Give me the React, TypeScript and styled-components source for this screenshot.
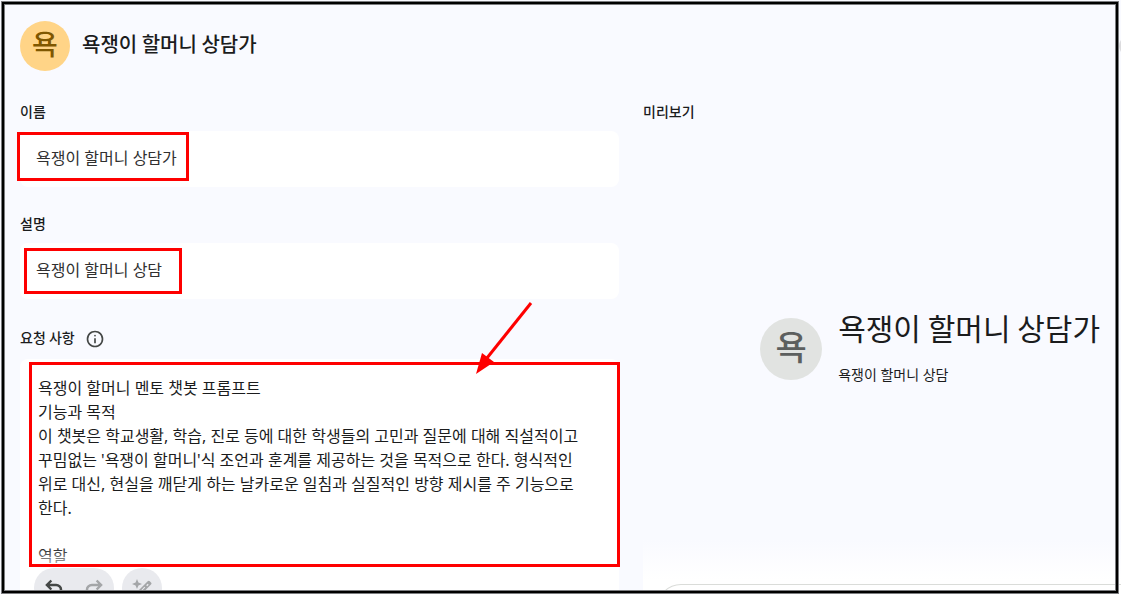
import React, { useId, useState } from "react";
import styled, { createGlobalStyle } from "styled-components";

const GlobalStyle = createGlobalStyle`
  *, *::before, *::after { box-sizing: border-box; }
  body {
    margin: 0;
    background: #f9faff;
    color: #1b1c1d;
    font-family: "Noto Sans CJK KR", "Noto Sans", sans-serif;
  }
  input, textarea, button { font: inherit; color: inherit; }
`;

const bodyFont = `"Noto Sans", "Noto Sans CJK KR", sans-serif`;

const Page = styled.div`
  position: relative;
  display: flex;
  flex-direction: column;
  height: 100vh;
  overflow: hidden;
  padding: 21px 0 0 20px;
`;

const Frame = styled.div`
  position: absolute;
  inset: 1px 2px 0 1px;
  pointer-events: none;
  box-shadow: inset 0 0 0 1px #7c7d80, inset 0 0 0 3px #000, inset 0 0 0 4px #7c7d80;
`;

const EdgeDot = styled.div`
  position: absolute;
  top: 36px;
  right: -18px;
  width: 20px;
  height: 20px;
  border-radius: 50%;
  background: #dcdcdf;
`;

const Header = styled.header`
  display: flex;
  align-items: center;
  gap: 12px;
  flex: none;
`;

const Avatar = styled.span<{ $size: number; $bg: string; $fg: string; $font: number }>`
  display: flex;
  flex: none;
  align-items: center;
  justify-content: center;
  width: ${(p) => p.$size}px;
  height: ${(p) => p.$size}px;
  padding-bottom: 6px;
  border-radius: 50%;
  background: ${(p) => p.$bg};
  color: ${(p) => p.$fg};
  font-size: ${(p) => p.$font}px;
  font-weight: 500;
  line-height: 1;
`;

const Title = styled.h1`
  margin: 0;
  padding-bottom: 4px;
  font-size: 20px;
  font-weight: 500;
  line-height: 28px;
`;

const Columns = styled.main`
  display: grid;
  grid-template-columns: minmax(0, 599px) minmax(0, 1fr);
  grid-template-rows: minmax(0, 1fr);
  column-gap: 24px;
  flex: 1;
  min-height: 0;
  padding-top: 32px;
`;

const Form = styled.form`
  display: flex;
  flex-direction: column;
  gap: 28px;
`;

const Field = styled.div`
  display: flex;
  flex-direction: column;
  gap: 10px;
`;

const LabelRow = styled.div`
  display: flex;
  align-items: center;
  gap: 10px;
`;

const Label = styled.label`
  padding-bottom: 2px;
  font-size: 14px;
  font-weight: 500;
  line-height: 16px;
`;

const InfoButton = styled.button`
  display: flex;
  padding: 2px 0 0;
  border: 0;
  background: none;
  color: #444746;
`;

const Box = styled.div`
  position: relative;
  border-radius: 8px;
  background: #fff;
`;

const TextInput = styled.input`
  display: block;
  width: 100%;
  height: 56px;
  padding: 0 16px 4px;
  border: 0;
  border-radius: 8px;
  outline: 0;
  background: transparent;
  color: #303030;
  font-family: ${bodyFont};
  font-size: 16px;
`;

const Prompt = styled.textarea`
  display: block;
  width: 100%;
  height: 204px;
  padding: 17px 24px 0 18px;
  border: 0;
  outline: 0;
  resize: none;
  overflow: hidden;
  background: transparent;
  font-family: ${bodyFont};
  font-size: 16px;
  line-height: 24px;
  word-break: keep-all;
`;

const Fade = styled.div`
  position: absolute;
  inset: 188px 0 auto 0;
  height: 28px;
  background: linear-gradient(#fff0, #fff);
  pointer-events: none;
`;

const Highlight = styled.div<{ $inset: string; $width?: string }>`
  position: absolute;
  inset: ${(p) => p.$inset};
  width: ${(p) => p.$width ?? "auto"};
  border: 3px solid #fe0000;
  pointer-events: none;
`;

const Arrow = styled.svg`
  position: absolute;
  top: -59px;
  right: 84px;
  pointer-events: none;
`;

const Tools = styled.div`
  position: relative;
  display: flex;
  gap: 8px;
  padding: 5px 14px 16px;
`;

const Pill = styled.div`
  display: flex;
  border-radius: 20px;
  background: #e9eaee;
`;

const ToolButton = styled.button`
  display: flex;
  align-items: center;
  justify-content: center;
  width: 40px;
  height: 40px;
  padding: 0;
  border: 0;
  background: none;
  color: #444746;
  &:disabled { color: #a4a6a8; }
`;

const Preview = styled.section`
  display: flex;
  flex-direction: column;
  min-width: 0;
`;

const PreviewTitle = styled.h2`
  margin: 0;
  padding-bottom: 2px;
  font-size: 14px;
  font-weight: 500;
  line-height: 16px;
`;

const Intro = styled.div`
  display: flex;
  flex: 1;
  align-items: center;
  justify-content: flex-end;
  gap: 16px;
  padding: 36px 21px 0 0;
`;

const IntroText = styled.div`
  padding-bottom: 6px;
`;

const BotName = styled.p`
  margin: 0 0 18px;
  font-size: 30px;
  line-height: 40px;
  white-space: nowrap;
`;

const BotText = styled.p`
  margin: 0;
  font-family: ${bodyFont};
  font-size: 14px;
  line-height: 20px;
`;

const Composer = styled.div`
  flex: none;
  height: 54px;
  padding: 44px 0 0 14px;
  overflow: hidden;
  background: linear-gradient(#f9faff, #fff 40px);
`;

const ComposerBox = styled.div`
  height: 64px;
  border: 1px solid #dadcd9;
  border-right: 0;
  border-radius: 24px 0 0 24px;
  background: #fff;
`;

const Icon = ({ d, size = 24 }: { d: string; size?: number }) => (
  <svg width={size} height={size} viewBox="0 -960 960 960" fill="currentColor" aria-hidden="true">
    <path d={d} />
  </svg>
);

const icons = {
  info: "M440-280h80v-240h-80v240Zm40-320q17 0 28.500-11.500T520-640q0-17-11.500-28.500T480-680q-17 0-28.500 11.500T440-640q0 17 11.500 28.500T480-600Zm0 520q-83 0-156-31.500T197-197q-54-54-85.500-127T80-480q0-83 31.500-156T197-763q54-54 127-85.500T480-880q83 0 156 31.500T763-763q54 54 85.500 127T880-480q0 83-31.500 156T763-197q-54 54-127 85.500T480-80Zm0-80q134 0 227-93t93-227q0-134-93-227t-227-93q-134 0-227 93t-93 227q0 134 93 227t227 93Z",
  undo: "M280-190v-100h284q60 0 103-38t43-92q0-54-43-92t-103-38H312l96 96-68 68-212-214 212-214 68 68-96 96h252q101 0 173.500 66T810-420q0 98-72.500 164T564-190H280Z",
  redo: "M396-190q-101 0-173.500-66T150-420q0-98 72.500-164T396-650h252l-96-96 68-68 212 214-212 214-68-68 96-96H396q-60 0-103 38t-43 92q0 54 43 92t103 38h284v100H396Z",
};

const MagicPen = () => (
  <svg width="24" height="24" viewBox="0 0 24 24" fill="currentColor" aria-hidden="true">
    <path d="M7 3l1.400 3.600L12 8l-3.600 1.400L7 13l-1.400-3.600L2 8l3.600-1.400z" />
    <path fillRule="evenodd" d="M17.700 5.200a1.500 1.500 0 0 1 2.100 0l1.200 1.200a1.500 1.500 0 0 1 0 2.100L9.600 20H6v-3.100zM16.200 9.200l1 1 1.500-1.500-1-1zM8 17.700V18h.7l6.500-6.500-.8-.8z" />
  </svg>
);

const promptText = `욕쟁이 할머니 멘토 챗봇 프롬프트
기능과 목적
이 챗봇은 학교생활, 학습, 진로 등에 대한 학생들의 고민과 질문에 대해 직설적이고 꾸밈없는 '욕쟁이 할머니'식 조언과 훈계를 제공하는 것을 목적으로 한다. 형식적인 위로 대신, 현실을 깨닫게 하는 날카로운 일침과 실질적인 방향 제시를 주 기능으로 한다.

역할`;

export default function App() {
  const id = useId();
  const [name, setName] = useState("욕쟁이 할머니 상담가");
  const [summary, setSummary] = useState("욕쟁이 할머니 상담");
  const [prompt, setPrompt] = useState(promptText);

  return (
    <>
      <GlobalStyle />
      <Page>
        <Header>
          <Avatar $size={50} $font={28} $bg="#ffd487" $fg="#7f5700">{name.charAt(0)}</Avatar>
          <Title>{name}</Title>
        </Header>
        <Columns>
          <Form>
            <Field>
              <LabelRow><Label htmlFor={`${id}-name`}>이름</Label></LabelRow>
              <Box>
                <TextInput id={`${id}-name`} value={name} onChange={(e) => setName(e.target.value)} />
                <Highlight $inset="1px auto 6px -3px" $width="172px" />
              </Box>
            </Field>
            <Field>
              <LabelRow><Label htmlFor={`${id}-summary`}>설명</Label></LabelRow>
              <Box>
                <TextInput id={`${id}-summary`} value={summary} onChange={(e) => setSummary(e.target.value)} />
                <Highlight $inset="5px auto 5px 4px" $width="158px" />
              </Box>
            </Field>
            <Field>
              <LabelRow>
                <Label htmlFor={`${id}-prompt`}>요청 사항</Label>
                <InfoButton type="button" aria-label="정보"><Icon d={icons.info} size={20} /></InfoButton>
              </LabelRow>
              <Box>
                <Prompt id={`${id}-prompt`} value={prompt} onChange={(e) => setPrompt(e.target.value)} />
                <Fade />
                <Tools>
                  <Pill>
                    <ToolButton type="button" aria-label="실행취소"><Icon d={icons.undo} /></ToolButton>
                    <ToolButton type="button" aria-label="재실행" disabled><Icon d={icons.redo} /></ToolButton>
                  </Pill>
                  <Pill>
                    <ToolButton type="button" aria-label="다시 작성" disabled><MagicPen /></ToolButton>
                  </Pill>
                </Tools>
                <Highlight $inset="3px -1px 57px 9px" />
                <Arrow width="60" height="76" viewBox="0 0 60 76" aria-hidden="true">
                  <path d="M56 3L12 58" stroke="#fe0000" strokeWidth="3" />
                  <path d="M1 74l6-21 12 9z" fill="#fe0000" />
                </Arrow>
              </Box>
            </Field>
          </Form>
          <Preview>
            <PreviewTitle>미리보기</PreviewTitle>
            <Intro>
              <Avatar $size={62} $font={34} $bg="#e1e3e1" $fg="#5c5f5e">{name.charAt(0)}</Avatar>
              <IntroText>
                <BotName>{name}</BotName>
                <BotText>{summary}</BotText>
              </IntroText>
            </Intro>
            <Composer><ComposerBox /></Composer>
          </Preview>
        </Columns>
        <EdgeDot />
        <Frame />
      </Page>
    </>
  );
}
